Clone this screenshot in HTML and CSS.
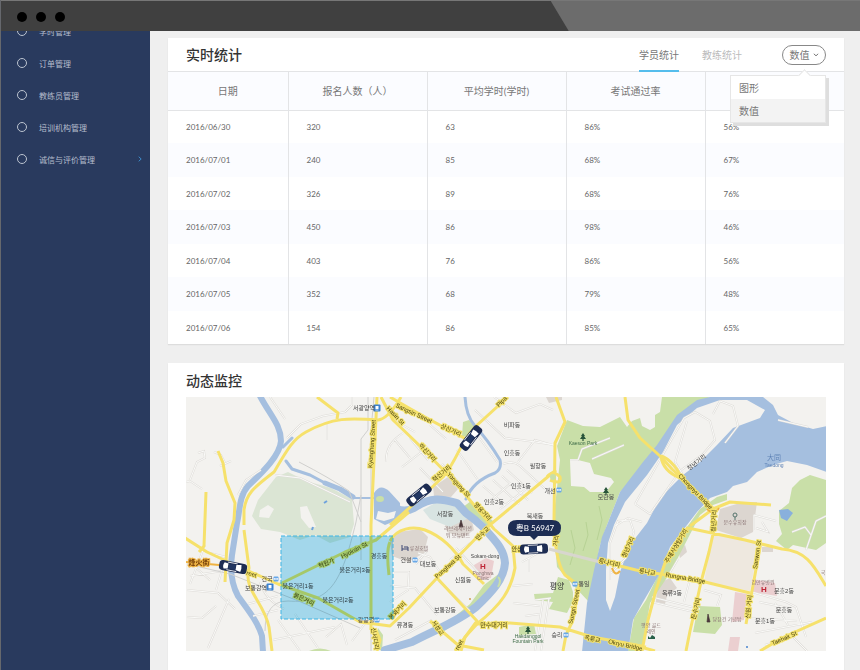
FILE: index.html
```html
<!DOCTYPE html>
<html lang="zh-CN">
<head>
<meta charset="utf-8">
<title>实时统计</title>
<link rel="stylesheet" href="styles.css">
</head>
<body>
<div class="window">
  <header class="titlebar"><span class="dot"></span><span class="dot"></span><span class="dot"></span></header>
  <div class="workspace">
    <nav class="sidebar">
      <ul class="menu">
        <li><a href="#"><span class="ring"></span>学时管理</a></li>
        <li><a href="#"><span class="ring"></span>订单管理</a></li>
        <li><a href="#"><span class="ring"></span>教练员管理</a></li>
        <li><a href="#"><span class="ring"></span>培训机构管理</a></li>
        <li><a href="#"><span class="ring"></span>诚信与评价管理
          <svg class="chevron" viewBox="0 0 4 6"><path d="M.7.7 3.2 3 .7 5.3"/></svg></a></li>
      </ul>
    </nav>
    <main class="content">
      <section class="card">
        <div class="card-head">
          <h2>实时统计</h2>
          <div class="tabs">
            <a class="tab active" href="#">学员统计</a>
            <a class="tab" href="#">教练统计</a>
          </div>
          <div class="picker">
            <button class="pill" type="button">数值<svg viewBox="0 0 6 4"><path d="M.8.8 3 2.8 5.2.8"/></svg></button>
            <div class="dropdown">
              <button type="button">图形</button>
              <button type="button" class="chosen">数值</button>
            </div>
          </div>
        </div>
        <table>
          <thead><tr><th>日期</th><th>报名人数（人）</th><th>平均学时(学时)</th><th>考试通过率</th><th></th></tr></thead>
          <tbody>
            <tr><td>2016/06/30</td><td>320</td><td>63</td><td>86%</td><td>56%</td></tr>
            <tr><td>2016/07/01</td><td>240</td><td>85</td><td>68%</td><td>67%</td></tr>
            <tr><td>2016/07/02</td><td>326</td><td>89</td><td>68%</td><td>76%</td></tr>
            <tr><td>2016/07/03</td><td>450</td><td>86</td><td>98%</td><td>46%</td></tr>
            <tr><td>2016/07/04</td><td>403</td><td>76</td><td>86%</td><td>56%</td></tr>
            <tr><td>2016/07/05</td><td>352</td><td>68</td><td>79%</td><td>48%</td></tr>
            <tr><td>2016/07/06</td><td>154</td><td>86</td><td>85%</td><td>65%</td></tr>
          </tbody>
        </table>
      </section>
      <section class="card monitor">
        <h2>动态监控</h2>
        <svg class="map" viewBox="186 397 640 254" role="img" aria-label="动态监控">
          <defs>
            <g id="car">
              <rect x="-14" y="-5" width="28" height="10" rx="3.5" fill="#1d2c52"/>
              <path d="M-9-3.2Q-11 0-9 3.2L-5 2.5V-2.5ZM8-3.5Q9 0 8 3.5L3 2.5V-2.5Z" fill="#fff"/>
              <path d="M-6-3.9H4M-6 3.9H4" stroke="#fff" stroke-width=".8"/>
              <rect x="-4.5" y="-2.5" width="7" height="5" fill="#223763"/>
            </g>
            <g id="station"><rect x="-3.5" y="-3.5" width="7" height="7" rx="1" fill="#3b82d0"/><rect x="-1.5" y="-2" width="3" height="3" fill="#fff"/><path d="M-1.5 2H1.5" stroke="#fff" stroke-width=".7"/></g>
            <g id="metro"><rect x="-2.5" y="-2.5" width="5" height="5" rx="1" fill="#68a8e8"/><path d="M-1.3 1V-1L0 .6 1.3-1V1" fill="none" stroke="#fff" stroke-width=".8"/></g>
            <path id="tree" d="M0-4 2-1H1L3 2H.6V4H-.6V2H-3L-1-1H-2Z" fill="#28543a"/>
            <path id="lanes" d="M270 397 285 419M287 438 301 424 323 416 345 412 352 405V397M327 424V440M186 482 190 481 202 489M190 480 197 462 205 458 204 451 198 453M214 452 221 455 225 463M220 466 231 461M238 495 246 480 261 470M275 475 300 478 350 502M403 433Q385 444 386 462M390 418 415 432M395 440 410 458M402 467 428 447M410 438 428 460M430 425 446 439M475 410 505 438 521 440 556 445M494 397 516 413 540 404 553 410M503 464Q513 460 520 466L545 489M507 470 532 493M518 462 535 440 556 446M483 486 505 505M493 480 519 504M502 476 528 500M488 503 511 483M500 509 526 489M475 432 497 462M457 450 478 480M442 464 462 486M420 468 443 492M205 545 190 584M210 553 226 557 216 590M190 576 222 571M195 567 210 580M187 590 218 593 235 609M187 617 202 618 216 606M229 599 208 648M273 640 335 627M278 620 300 651M295 614 318 648M326 637 341 624 347 645M352 641 366 622M248 604 278 596M253 616 278 610M260 582Q265 600 284 609M394 572H409L408 590 390 602M418 553 430 557 440 572M427 551 416 564M439 581 470 611M456 548 481 575M470 543 450 560M390 586 415 588 437 615M395 640 432 620M512 550 532 547 538 553 522 562M529 558V572M543 600 535 651M549 598 541 651M535 600 551 598M512 586 533 584M513 603 540 606M525 616 540 614M652 597 700 609M652 602 698 613M704 590 721 595 717 606M752 592 786 602 796 607 806 637M759 602 788 608M775 603 788 625M750 618 797 621M755 633 812 622M765 645 785 639M793 637 807 651M690 579 684 602M668 576 678 559M806 550 816 521 826 516M792 532 805 527 811 535M570 460H578L582 449 610 438M592 459 624 445"/>
            <path id="island-lanes" d="M635 504 650 514 680 471 703 454 715 440 710 421 695 412 684 418 665 451 635 504M683 475 675 462 687 421M615 526 628 518 642 522M725 443 738 426 733 406 720 401 713 414M610 580V543L618 521 630 520 634 532 626 558 611 573M754 530V515L776 521M762 522 768 532 756 528M778 420 808 427"/>
          </defs>
          <rect x="185" y="397" width="642" height="255" fill="#f3f2ef"/>
          <!-- built-up blocks -->
          <g fill="#dcd6d0">
            <path d="M390 541 398 532 420 529 428 537 424 553 408 562 392 556ZM443 516 452 508 470 512 474 530 462 538 447 532Z"/>
            <path d="M433 487 448 477 458 489 451 497 434 496ZM546 397H562V400L549 403Z"/>
            <path d="M720 509 740 503 757 502 753 532 741 538 716 530ZM611 547H622V561H611ZM657 584 670 578 677 588 667 596 665 604 656 602ZM678 550 685 545 687 552 680 558ZM762 547H773V552H762Z"/>
          </g>
          <path d="M713 532 759 543 750 591 704 582Z" fill="#eee8df"/>
          <path d="M423 510 440 500 460 505 469 518 450 527 430 519Z" fill="#d8e4e2"/>
          <path d="M474 565 486 558 494 561 491 578 478 581ZM752 579 775 583 777 596 752 592ZM735 592 747 594 744 620 732 622ZM730 637H740L738 651H728Z" fill="#ebcfd0"/>
          <!-- pale hillside -->
          <path d="M276 477 288 472 306 481 331 488 352 499 354 524 350 537 330 543 315 535 300 540 280 532 261 529 252 516 258 500Z" fill="#dbe5d4"/>
          <path d="M300 507 307 506 316 527 309 528 301 518ZM260 510 268 505 274 509 269 518 259 517Z" fill="#f3f2ef"/>
          <!-- parks -->
          <g fill="#c9dfa8">
            <path d="M567 420 583 426 600 427 620 417 627 427 632 421 640 418 642 426 650 430 655 427 655 415 660 412 662 397H710L690 407 663 451 620 492 607 525 600 545 594 575 589 602 573 585 557 567 553 522 556 497 560 460 557 446Z"/>
            <path d="M463 422 469 420 475 427 472 438 462 436ZM558 577 569 580 573 592 573 601 567 613 549 609 553 602 535 600 534 594 553 593Z"/>
            <path d="M690 523 700 509 717 497 727 494 727 500 713 505 700 515 670 573 650 603 642 651H628L634 618 646 600 662 567 672 546Z"/>
            <path d="M463 507 471 501 494 522 489 528 481 520ZM779 511 789 503 792 488 800 480 810 475 826 480V543L816 550 793 545 787 550 776 541 782 534 779 524Z"/>
            <path d="M698 606 720 607 722 625 715 634 693 632ZM519 627 534 624 536 634 519 635ZM484 585 500 573 490 595 472 612 440 634 448 622 470 604Z"/>
            <path d="M378 628 383 635 382 651 375 648ZM309 651Q320 646 331 651Z"/>
          </g>
          <path d="M570 460H578L590 463 594 474 611 478 614 482 606 492 590 492 584 487 571 486Z" fill="#f3f2ef"/>
          <path d="M583 551 588 535 586 522M570 565 575 548 571 530M597 540 602 520 599 506" stroke="#b7d294" fill="none"/>
          <!-- water -->
          <path d="M607 525 620 492 643 462 657 445 677 415 697 400 710 397H763L773 405 778 415 793 423 813 429 827 426V472L807 465 787 461 773 465 757 472 747 482 733 486 727 492 710 498 697 512 687 525 670 547 660 573 643 602 633 620 628 652H582L587 603 594 570 602 537Z" fill="#a5bfdf"/>
          <path d="M614 525 625 502 647 475 663 452 677 425 697 408 720 400H747L765 410 760 418 733 428 717 445 700 462 683 475 660 498 647 523 630 545 620 572 615 597 610 611 606 600 606 570 608 543Z" fill="#f3f2ef"/>
          <g fill="none" stroke="#a5bfdf" stroke-linecap="round" stroke-linejoin="round">
            <path stroke-width="6" d="M260 396C270 415 281 425 281 441 280 455 264 471 248 486 239 496 240 511 237 523L232 555C230 570 232 585 238 596 248 610 258 622 262 636L263 652"/>
            <path stroke-width="3" d="M283 447 292 438M465 397Q466 416 475 426 488 440 500 460 502 469 495 473 473 481 466 499M286 461 292 469 310 475 325 483"/>
            <path stroke-width="5" d="M325 483 340 489 353 497"/><path stroke-width="2" d="M353 498H376"/>
            <path stroke-width="8" d="M389 503Q401 515 414 508C432 496 442 499 457 503L466 513Q476 520 484 528C494 540 504 548 505 563 504 579 492 592 476 607 457 622 435 630 412 642L385 650"/>
          </g>
          <path d="M374 493Q380 483 389 491L400 503V519L385 525 374 519Z" fill="#a5bfdf"/>
          <path d="M378 511 388 513 396 511 394 518 384 521 376 519Z" fill="#f3f2ef"/>
          <ellipse cx="380" cy="499" rx="4" ry="3" fill="#c9dfa8"/><path d="M779 510 788 509 793 513 787 521 781 518Z" fill="#89b0dc"/><path d="M498 577Q502 580 498 587" stroke="#c9dfa8" stroke-width="2" fill="none"/>
          <!-- lanes: pale casing under a white core -->
          <g class="lane-edge"><use href="#lanes"/><use href="#island-lanes"/></g>
          <g class="lane"><use href="#lanes"/><use href="#island-lanes"/></g>
          <path class="rail" d="M368 397V430L361 439V560M374 397 371 430V651M265 631Q265 601 288 601C330 604 341 584 356 522L361 495M187 564 230 574 301 602 360 628M299 462Q330 478 349 491L361 522"/>
          <!-- avenues -->
          <g class="avenue">
            <path d="M317 397 338 413 337 419M244 525V510C246 494 253 488 274 472 287 450 293 439 306 432 333 417 350 418 378 420Q387 419 398 402L401 397M377 397 376 418 371 525V630M218 451 223 463 226 481 235 503 234 520 227 543 225 582M206 492 204 546 199 552M185 538 207 552 235 565 278 584 318 598 360 622 390 626 409 608 437 578 485 529 556 470M381 397 393 420 420 446 454 481 494 529 513 546 515 568C511 590 502 604 477 624L465 637 461 651M390 397Q420 415 466 439M508 397 475 427C460 442 458 459 443 477L416 502 390 525"/>
            <path d="M280 584 345 552 376 540 409 512M390 541C397 528 413 526 425 530 441 536 455 549 463 564L484 584M437 578 477 621 455 651M430 621 458 645 484 650M477 624 510 623 560 627 592 637 626 643 655 651M244 530 249 568C243 590 264 602 269 627L272 651M556 397 565 422 555 443 554 521Q555 562 565 575L579 586 573 620 566 635 563 651M625 397 628 420 640 438 660 456 672 469 691 487 713 508 715 525 709 552 701 582 696 605 690 631 686 651M690 526 713 509 730 502 771 505M600 561 636 570 660 574 701 581 750 593M688 528 745 540 782 549C807 551 814 566 826 586M761 542 752 591 746 624M688 527 666 560 656 590 648 620 642 651M826 618 784 637 760 651M626 643 646 647M376 630 380 640 377 651M390 542Q386 550 389 575"/>
            <path d="M661 456C669 458 681 472 680 478 668 473 662 465 661 456M547 477Q553 469 560 477 562 485 550 480"/>
          </g>
          <path d="M185 562 230 566M612 568Q615 577 620 571M707 509Q714 516 719 508" fill="none" stroke="#efb343" stroke-width="2"/>
          <path d="M549 549 600 562" stroke="#d8d6ce" stroke-width="3"/>
          <circle cx="553" cy="477" r="3" fill="#c9dfa8"/>
          <!-- facilities -->
          <use href="#station" x="377" y="408"/><use href="#station" x="270" y="587"/>
          <use href="#metro" x="276" y="579"/><use href="#metro" x="559" y="490"/><use href="#metro" x="415" y="560"/><use href="#metro" x="575" y="584"/><use href="#metro" x="566" y="635"/><use href="#metro" x="377" y="620"/>
          <use href="#tree" x="583" y="437"/><use href="#tree" x="606" y="491"/><use href="#tree" x="528" y="630"/>
          <path d="M461 520 463 527H459ZM708 614 710 622H707Z" fill="#49363a" stroke="#49363a" stroke-width=".7"/>
          <path d="M402 545V551M402 549H408V551M404 547H408V549" fill="none" stroke="#3c4672"/>
          <path d="M648 636 650 638 652 635 655 637V639H648Z" fill="#286049"/>
          <circle cx="735" cy="515" r="2" fill="none" stroke="#55746c"/><path d="M735 517V520" stroke="#55746c"/>
          <circle cx="470" cy="599" r="1" fill="#cb9d54"/><circle cx="747" cy="647" r="1" fill="#4983ce"/><path d="M312 530 313 527" stroke="#6ea1dd" stroke-width="2"/><path d="M324 503 327 501" stroke="#6ea1dd" stroke-width="2"/>
          <!-- place names -->
          <g class="place">
            <text x="364" y="410">서광양역</text><text x="512" y="427">비파동</text><text x="512" y="455">인흥동</text><text x="538" y="468">필항동</text><text x="521" y="488">인흥1동</text><text x="494" y="504">인흥2동</text><text x="535" y="518">북새동</text><text x="445" y="516">서창동</text><text x="550" y="493">개선</text><text x="606" y="499">모란봉</text>
            <text x="267" y="581">건국</text><text x="256" y="590">보통강역</text><text x="379" y="558">경흥동</text><text x="355" y="572">붉은거리3동</text><text x="298" y="588">붉은거리1동</text><text x="338" y="602">붉은거리2동</text><text x="366" y="622">광공렬</text>
            <text x="406" y="562">건설</text><text x="428" y="566">대보동</text><text x="463" y="582">신원동</text><text x="445" y="612">보통강동</text><text x="405" y="627">류경동</text><text x="584" y="586">통일</text><text x="557" y="637">승리</text><text x="672" y="595">옥류3동</text><text x="784" y="593">문흥2동</text><text x="784" y="612">문흥동</text><text x="765" y="623">문흥1동</text>
            <text class="latin" x="485" y="558">Sokam-dong</text>
          </g>
          <text class="city" x="557" y="589">평양</text>
          <g class="poi">
            <text x="458" y="530">라브레세이션</text><text x="458" y="537">워 모뉴먼트</text><text x="419" y="550">류경호텔</text><text x="483" y="575">Ponghwa</text><text x="483" y="580">Clinic</text><text x="735" y="524">문수유희장</text><text x="763" y="584">김만유병원</text><text x="727" y="621">당창건 기념탑</text><text x="651" y="627">평양 골드</text><text x="651" y="633">레인</text><text x="823" y="574">국</text>
          </g>
          <g class="park"><text x="583" y="445">Kaeson Park</text><text x="528" y="638">Hakdanggol</text><text x="528" y="643">Fountain Park</text></g>
          <g class="hospital"><text x="483" y="569">H</text><text x="764" y="592">H</text></g>
          <g class="sea"><text class="sea-title" x="774" y="460">大同</text><text x="774" y="467">Taedong</text></g>
          <g class="road-name">
            <text transform="translate(374 444) rotate(-86)">Kyonghung Street</text>
            <text transform="translate(413 415) rotate(25)">Sangsin Street</text><text transform="translate(394 417) rotate(46)">Hasin St</text><text transform="translate(450 432) rotate(24)">상신거리</text><text transform="translate(426 454) rotate(48)">하신거리</text><text transform="translate(443 475) rotate(-40)">혁신거리</text><text transform="translate(457 486) rotate(48)">Yongung St</text><text transform="translate(481 513) rotate(48)">영웅거리</text><text transform="translate(503 403) rotate(-45)">Pipa</text>
            <text transform="translate(484 535) rotate(-44)">만수교</text><text transform="translate(449 568) rotate(-42)">Ponghwa St</text><text transform="translate(399 612) rotate(-46)">봉화거리</text><text transform="translate(436 629) rotate(55)">서성교</text><text transform="translate(494 627)">만수대거리</text><text transform="translate(461 646) rotate(-62)">reet</text>
            <text transform="translate(517 551)">안상</text><text transform="translate(558 541) rotate(-82)">거리</text><text transform="translate(576 607) rotate(-78)">Sungri Street</text><text transform="translate(592 641) rotate(12)">옥류교</text><text transform="translate(625 647) rotate(12)">Okryu Bridge</text>
            <text transform="translate(609 565) rotate(13)">릉나다리</text><text transform="translate(647 574) rotate(10)">릉나교</text><text transform="translate(685 580) rotate(10)">Rungna Bridge</text><text transform="translate(630 548) rotate(-66)">청년거리</text><text transform="translate(678 547) rotate(-59)">주체사상탑거리</text><text transform="translate(694 493) rotate(46)">Chongnyu Bridge</text><text transform="translate(716 521) rotate(-87)">청년거리</text>
            <text transform="translate(698 609) rotate(-76)">문수거리</text><text transform="translate(751 607) rotate(-84)">신원 거리</text><text transform="translate(759 555) rotate(-82)">Sanwon St</text><text transform="translate(785 640) rotate(-24)">Taehak St</text>
            <text transform="translate(251 576) rotate(18)">reet</text><text transform="translate(327 565) rotate(-23)">혁원가</text><text transform="translate(355 552) rotate(-27)">Hyoksin St</text><text transform="translate(303 601) rotate(26)">붉은거리</text><text transform="translate(373 639) rotate(80)">신서다리</text>
          </g>
          <text class="bank-name" transform="translate(698 464) rotate(-38)">청년거리</text>
          <text class="beacon" x="199" y="565">烽火街</text>
          <!-- monitored zone -->
          <rect class="zone-tint" x="281" y="536" width="112" height="83"/>
          <rect class="zone-edge" x="281" y="536" width="112" height="83"/>
          <!-- vehicles -->
          <use href="#car" transform="translate(233 567) rotate(11)"/><use href="#car" transform="translate(419 495) rotate(-39)"/><use href="#car" transform="translate(471 438) rotate(-52)"/><use href="#car" transform="translate(534 549) rotate(-3)"/>
          <path d="M517 520H552Q561 520 561 528T552 536H538L534 540 530 536H517Q508 536 508 528T517 520Z" fill="#1d2d54"/>
          <text class="plate" x="535" y="531">粤B 56947</text>
        </svg>
      </section>
    </main>
  </div>
</div>
</body>
</html>
```
FILE: styles.css
```css
* { box-sizing: border-box; }
body {
  margin: 0;
  color: #666;
  font-family: Lato, "Noto Sans CJK SC", sans-serif;
  font-size: 8px;
}
h2, ul { margin: 0; padding: 0; }
h2 { color: #333; font-size: 14px; font-weight: 500; line-height: 20px; }
a { color: inherit; text-decoration: none; }
button { border: 0; background: none; color: inherit; font: inherit; }
.window { display: flex; flex-direction: column; height: 100vh; overflow: hidden; border-left: 1px solid #66686d; }
.titlebar {
  display: flex;
  flex: none;
  align-items: center;
  gap: 9px;
  height: 31px;
  padding: 2px 16px 0;
  border-top: 1px solid #777;
  background: #404040;
  position: relative;
}
.titlebar::after {
  content: "";
  position: absolute;
  inset: 0 0 0 64%;
  background: #6c6c6c;
  clip-path: polygon(0 0, 100% 0, 100% 100%, 18px 100%);
}
.dot { width: 10px; height: 10px; border-radius: 50%; background: #000; }
.workspace { display: flex; flex: 1; min-height: 0; }
.sidebar { flex: none; width: 149px; overflow: hidden; background: #293a5e; color: #b5bdcd; }
.menu { margin-top: -16px; list-style: none; }
.menu a { display: flex; align-items: center; height: 32px; padding: 0 8px 0 16px; }
.ring { width: 10px; height: 10px; margin-right: 12px; border: 1px solid #bcc4d0; border-radius: 50%; }
.chevron { width: 4px; height: 6px; margin-left: auto; }
.chevron path { fill: none; stroke: #3d8bc9; }
.content { display: flex; flex: 1; flex-direction: column; gap: 19px; min-width: 0; padding: 7px 16px 0 18px; background: #efefef; }
.card { flex: none; background: #fff; box-shadow: 0 1px 1px #ddd; }
.card-head { display: flex; align-items: center; height: 34px; padding: 0 18px; border-bottom: 1px solid #e3e4e6; }
.tabs { display: flex; align-self: stretch; gap: 23px; margin-left: auto; font-size: 10px; }
.tab { display: flex; align-items: center; color: #bbb; }
.tab.active { margin-bottom: -1px; border-bottom: 2px solid #55bdec; color: #777; }
.picker { position: relative; margin-left: 40px; color: #777; font-size: 10px; }
.pill { display: flex; align-items: center; justify-content: center; gap: 3px; width: 44px; height: 20px; padding: 0; border: 1px solid #888; border-radius: 10px; }
.pill svg { width: 6px; height: 4px; }
.pill path { fill: none; stroke: #777; }
.dropdown { position: absolute; top: 30px; right: 0; width: 96px; border: 1px solid #e6e6e6; background: #fff; box-shadow: 3px 3px 0 #dedede; }
.dropdown::before { content: ""; position: absolute; top: -5px; right: 16px; width: 8px; height: 8px; border: solid #e6e6e6; border-width: 1px 0 0 1px; background: #fff; transform: rotate(45deg); }
.dropdown button { display: block; position: relative; width: 100%; height: 23px; padding: 0 8px; text-align: left; }
.dropdown .chosen { background: #f3f3f3; }
table { width: 100%; border-collapse: collapse; table-layout: fixed; }
th, td { padding: 0 0 0 18px; border-left: 1px solid #e3e4e6; text-align: left; }
th:first-child, td:first-child { border-left: 0; }
th:first-child { width: 120px; }
th { height: 38px; padding: 0; border-bottom: 1px solid #e3e4e6; background: #fbfcff; color: #777; font-size: 10px; font-weight: 400; text-align: center; }
td { height: 33px; }
tbody tr:nth-child(even) { background: #fbfcff; }
tbody tr:nth-child(even) td { height: 34px; }
.monitor { flex: 1 0 auto; padding: 8px 18px; }
.map { display: block; width: 100%; margin-top: 6px; overflow: hidden; isolation: isolate; }
.map text { text-anchor: middle; font-family: "Liberation Sans", "Noto Sans CJK KR", sans-serif; }
.lane-edge { fill: none; stroke: #dfddd9; stroke-width: 2; }
.lane { fill: none; stroke: #fafaf8; stroke-width: 1; }
.rail { fill: none; stroke: #d0d0ce; stroke-width: 1; }
.avenue { fill: none; stroke: #f6e16b; stroke-width: 3; stroke-linejoin: round; }
.place { fill: #444; font-size: 6px; }
.poi { fill: #8d7777; font-size: 5px; }
.park { fill: #3f6c48; font-size: 5px; }
.city { fill: #333; font-size: 8px; }
.hospital { fill: #bf2637; font-size: 8px; font-weight: 700; }
.latin { font-size: 5px; }
.sea { fill: #5f83b6; font-size: 5px; }
.sea-title { font-size: 7px; }
.road-name { fill: #4c4414; font-size: 6px; stroke: #f4e36d; stroke-width: 2px; paint-order: stroke; }
.bank-name { fill: #444; font-size: 6px; }
.beacon { fill: #713d0a; font-size: 7px; font-weight: 700; stroke: #f0b545; stroke-width: 2px; paint-order: stroke; }
.zone-tint { fill: #abe3fb; mix-blend-mode: multiply; }
.zone-edge { fill: none; stroke: #3fb5e5; stroke-dasharray: 4 2; }
.map .plate { fill: #fff; font-family: Lato, "Noto Sans CJK SC", sans-serif; font-size: 8px; }
```
